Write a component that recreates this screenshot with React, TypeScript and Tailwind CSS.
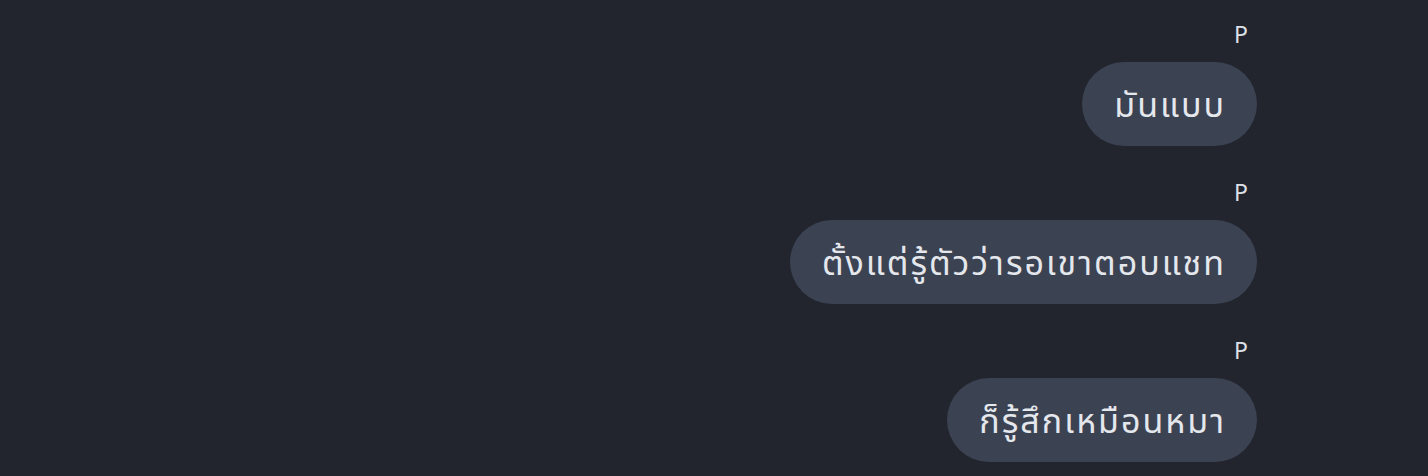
const messages = [
  { id: 1, sender: "P", text: "มันแบบ" },
  { id: 2, sender: "P", text: "ตั้งแต่รู้ตัวว่ารอเขาตอบแชท" },
  { id: 3, sender: "P", text: "ก็รู้สึกเหมือนหมา" },
];

export default function App() {
  return (
    <div
      className="w-[1428px] h-[476px] overflow-hidden bg-[#22252d] pr-[171px] pt-[22px] flex flex-col items-end"
      style={{ fontFamily: '"Noto Sans", "Noto Sans Thai", "Liberation Sans", sans-serif' }}
    >
      {messages.map((msg) => (
        <div key={msg.id} className="flex flex-col items-end mb-[34px]">
          <p className="text-[23px] leading-[24px] text-[#dde1e7] mr-[9px]">{msg.sender}</p>
          <div className="mt-[16px] h-[84px] pl-[32px] pr-[31px] rounded-full bg-[#3b4252] flex items-center">
            <span className="text-[34px] tracking-[2px] text-[#e4e7ec] leading-none">{msg.text}</span>
          </div>
        </div>
      ))}
    </div>
  );
}
